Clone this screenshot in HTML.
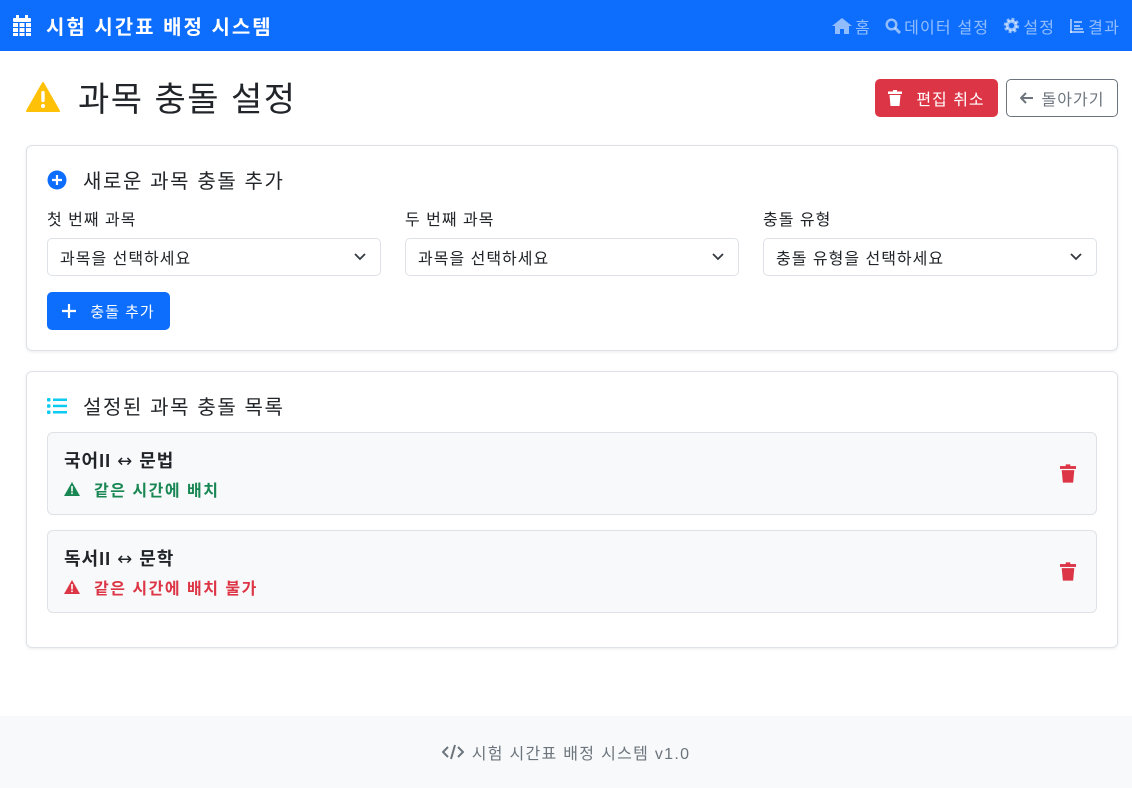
<!DOCTYPE html>
<html><head><meta charset="utf-8"><style>
*{box-sizing:border-box;margin:0;padding:0}
body{width:1132px;height:788px;font-family:"Liberation Sans","Noto Sans CJK KR",sans-serif;color:#212529;background:#fff;position:relative;overflow:hidden;letter-spacing:1px}
.nav{height:51px;background:#0d6efd;display:flex;align-items:center;padding:0 12px}
.brand{color:#fff;font-weight:bold;font-size:20px;display:flex;align-items:center;gap:14px;letter-spacing:2px}
.links{margin-left:auto;display:flex;gap:14px;color:rgba(255,255,255,.55);font-size:16px;letter-spacing:1.2px}
.links span{display:flex;align-items:center;gap:3px}
h1{position:absolute;left:26px;top:72px;font-size:34px;font-weight:normal;display:flex;align-items:center;gap:18px;letter-spacing:1.5px}
.btn{position:absolute;height:38px;border-radius:5px;font-size:16px;display:flex;align-items:center;justify-content:center}
.card{position:absolute;left:26px;width:1092px;border:1px solid #dee2e6;border-radius:6px;box-shadow:0 1px 3px rgba(0,0,0,.08)}
.ct{position:absolute;left:20px;font-size:20px;display:flex;align-items:center;gap:16px;letter-spacing:1.6px}
.lbl{position:absolute;top:60px;font-size:16px}
.sel{position:absolute;top:92px;width:334px;height:38px;border:1px solid #dee2e6;border-radius:5px;font-size:16px;padding:6px 12px}
.sel svg{position:absolute;right:14px;top:14px}
.item{position:absolute;left:20px;width:1050px;height:83px;background:#f8f9fa;border:1px solid #dee2e6;border-radius:6px}
.it{position:absolute;left:16px;top:14px;font-weight:bold;font-size:18px}
.is{position:absolute;left:16px;top:44px;font-weight:bold;font-size:16px;display:flex;align-items:center;gap:14px;letter-spacing:1.5px}
.tr{position:absolute;right:20px;top:31px}
.foot{position:absolute;left:0;top:716px;width:1132px;height:72px;background:#f8f9fa;color:#6c757d;font-size:16px;display:flex;align-items:center;justify-content:center;gap:8px;letter-spacing:1.3px}
</style></head><body>
<div class="nav"><div class="brand"><svg width="20" height="22" viewBox="0 0 20 22"><rect x="4" y="0" width="3" height="5" fill="#fff"/><rect x="13" y="0" width="3" height="5" fill="#fff"/><rect x="1" y="3" width="18" height="4" rx="1" fill="#fff"/><g fill="#fff"><rect x="1" y="8" width="5" height="4"/><rect x="7.5" y="8" width="5" height="4"/><rect x="14" y="8" width="5" height="4"/><rect x="1" y="13" width="5" height="4"/><rect x="7.5" y="13" width="5" height="4"/><rect x="14" y="13" width="5" height="4"/><rect x="1" y="18" width="5" height="3"/><rect x="7.5" y="18" width="5" height="3"/><rect x="14" y="18" width="5" height="3"/></g></svg>시험 시간표 배정 시스템</div>
<div class="links"><span><svg width="20" height="16" viewBox="0 0 20 16" fill="rgba(255,255,255,.55)"><path d="M10 0L0 8h3v8h5v-5h4v5h5V8h3z"/></svg>홈</span><span><svg width="16" height="16" viewBox="0 0 16 16"><circle cx="6.5" cy="6.5" r="4.8" fill="none" stroke="rgba(255,255,255,.55)" stroke-width="2.4"/><path d="M10 10l5 5" stroke="rgba(255,255,255,.55)" stroke-width="3"/></svg>데이터 설정</span><span><svg width="17" height="17" viewBox="0 0 16 16"><circle cx="8" cy="8" r="5.5" fill="none" stroke="rgba(255,255,255,.55)" stroke-width="3.5" stroke-dasharray="2.4 1.9"/><circle cx="8" cy="8" r="4" fill="none" stroke="rgba(255,255,255,.55)" stroke-width="3"/></svg>설정</span><span><svg width="16" height="16" viewBox="0 0 16 16" fill="rgba(255,255,255,.55)"><rect x="1" y="1" width="2" height="14"/><rect x="1" y="13" width="14" height="2"/><rect x="5" y="3" width="8" height="2"/><rect x="5" y="7" width="6" height="2"/><rect x="5" y="10" width="9" height="2"/></svg>결과</span></div></div>
<h1><svg width="34" height="30" viewBox="0 0 34 30"><path d="M17 1L33 29H1z" fill="#ffc107" stroke="#ffc107" stroke-linejoin="round" stroke-width="2"/><rect x="15.3" y="9" width="3.4" height="11" rx="1.5" fill="#fff"/><circle cx="17" cy="24" r="2" fill="#fff"/></svg>과목 충돌 설정</h1>
<div class="btn" style="left:875px;top:79px;width:123px;background:#dc3545;color:#fff;gap:14px"><svg width="14" height="16" viewBox="0 0 14 16" fill="#fff"><rect x="0" y="1.5" width="14" height="2.5"/><rect x="5" y="0" width="4" height="2"/><path d="M1.5 5h11l-1 11h-9z"/></svg>편집 취소</div>
<div class="btn" style="left:1006px;top:79px;width:112px;border:1px solid #6c757d;color:#6c757d;gap:8px"><svg width="14" height="12" viewBox="0 0 14 12"><path d="M6 1L1 6l5 5M1 6h12" fill="none" stroke="#6c757d" stroke-width="2"/></svg>돌아가기</div>
<div class="card" style="top:145px;height:206px">
<div class="ct" style="top:19px"><svg width="20" height="20"><circle cx="10" cy="10" r="9.5" fill="#0d6efd"/><path d="M10 5v10M5 10h10" stroke="#fff" stroke-width="2.2"/></svg>새로운 과목 충돌 추가</div>
<div class="lbl" style="left:20px">첫 번째 과목</div><div class="lbl" style="left:378px">두 번째 과목</div><div class="lbl" style="left:736px">충돌 유형</div>
<div class="sel" style="left:20px">과목을 선택하세요<svg width="12" height="8"><path d="M1 1l5 5 5-5" fill="none" stroke="#343a40" stroke-width="1.8"/></svg></div>
<div class="sel" style="left:378px">과목을 선택하세요<svg width="12" height="8"><path d="M1 1l5 5 5-5" fill="none" stroke="#343a40" stroke-width="1.8"/></svg></div>
<div class="sel" style="left:736px">충돌 유형을 선택하세요<svg width="12" height="8"><path d="M1 1l5 5 5-5" fill="none" stroke="#343a40" stroke-width="1.8"/></svg></div>
<div class="btn" style="left:20px;top:146px;width:123px;background:#0d6efd;color:#fff;gap:14px;font-size:15px"><svg width="14" height="14"><path d="M7 0v14M0 7h14" stroke="#fff" stroke-width="2.2"/></svg>충돌 추가</div>
</div>
<div class="card" style="top:371px;height:277px">
<div class="ct" style="top:19px"><svg width="20" height="16" viewBox="0 0 20 16" fill="#0dcaf0"><rect x="0" y="0" width="3.5" height="3.5" rx="1"/><rect x="0" y="6.2" width="3.5" height="3.5" rx="1"/><rect x="0" y="12.5" width="3.5" height="3.5" rx="1"/><rect x="6" y="0.5" width="14" height="2.5"/><rect x="6" y="6.7" width="14" height="2.5"/><rect x="6" y="13" width="14" height="2.5"/></svg>설정된 과목 충돌 목록</div>
<div class="item" style="top:60px"><div class="it">국어II <span style="font-weight:normal;font-size:18px;font-family:'DejaVu Sans',sans-serif">↔</span> 문법</div><div class="is" style="color:#198754"><svg width="16" height="14" viewBox="0 0 16 14"><path d="M8 0L16 14H0z" fill="#198754"/><rect x="7.2" y="4" width="1.6" height="5.5" fill="#fff"/><rect x="7.2" y="10.5" width="1.6" height="1.6" fill="#fff"/></svg>같은 시간에 배치</div><svg class="tr" width="16" height="19" viewBox="0 0 14 16" fill="#dc3545"><rect x="0" y="1.5" width="14" height="2.5"/><rect x="5" y="0" width="4" height="2"/><path d="M1.5 5h11l-1 11h-9z"/></svg></div>
<div class="item" style="top:158px"><div class="it">독서II <span style="font-weight:normal;font-size:18px;font-family:'DejaVu Sans',sans-serif">↔</span> 문학</div><div class="is" style="color:#dc3545"><svg width="16" height="14" viewBox="0 0 16 14"><path d="M8 0L16 14H0z" fill="#dc3545"/><rect x="7.2" y="4" width="1.6" height="5.5" fill="#fff"/><rect x="7.2" y="10.5" width="1.6" height="1.6" fill="#fff"/></svg>같은 시간에 배치 불가</div><svg class="tr" width="16" height="19" viewBox="0 0 14 16" fill="#dc3545"><rect x="0" y="1.5" width="14" height="2.5"/><rect x="5" y="0" width="4" height="2"/><path d="M1.5 5h11l-1 11h-9z"/></svg></div>
</div>
<div class="foot"><svg width="22" height="16" viewBox="0 0 22 16"><path d="M6 3L1 8l5 5M16 3l5 5-5 5M13 1L9 15" fill="none" stroke="#6c757d" stroke-width="2"/></svg>시험 시간표 배정 시스템 v1.0</div>
</body></html>
